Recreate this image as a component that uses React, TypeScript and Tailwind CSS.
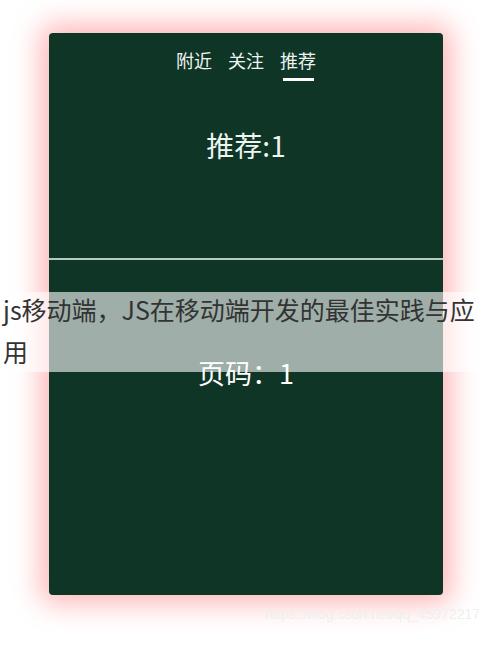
import { useState } from 'react'

const tabs = ['附近', '关注', '推荐']

export default function App() {
  const [active, setActive] = useState(2)
  const page = 1

  return (
    <div
      className="relative w-[490px] h-[651px] overflow-hidden bg-white pt-[33px] pl-[49px]"
      style={{ fontFamily: '"Noto Sans CJK SC", "Noto Sans", sans-serif' }}
    >
      <div className="w-[394px] h-[562px] rounded-[4px] bg-[#0f3527] text-[#eef4f0] shadow-[0_0_28px_8px_rgba(255,90,90,0.45)] flex flex-col">
        {/* swiper area */}
        <div className="h-[225px] flex flex-col items-center">
          <div className="flex justify-center gap-[16px] pt-[15px]">
            {tabs.map((t, i) => (
              <button
                key={t}
                onClick={() => setActive(i)}
                className="flex flex-col items-center text-[18px] leading-[24px]"
              >
                {t}
                <span
                  className={`mt-[6px] h-[3px] w-[31px] ${i === active ? 'bg-white' : 'bg-transparent'}`}
                />
              </button>
            ))}
          </div>
          <div className="mt-[48px] text-[28px] leading-[32px]">
            {tabs[active]}:{page}
          </div>
        </div>

        <div className="h-[2px] bg-[#b4cbc2]" />

        <div className="flex justify-center mt-[97px] text-[27px] leading-[32px] text-white">
          页码：{page}
        </div>
      </div>

      {/* title overlay */}
      <div className="absolute left-0 top-[292px] w-[490px] h-[80px] bg-white/60 px-[3px] text-[25px] text-[#333333]">
        <div className="mt-[-4px] leading-[42px]">js移动端，JS在移动端开发的最佳实践与应用</div>
      </div>

      <div
        className="absolute right-[10px] top-[604px] text-[14px] leading-[20px] text-[#efefef]"
        style={{ fontFamily: '"Liberation Sans", Arial, sans-serif' }}
      >
        https://blog.csdn.net/qq_45972217
      </div>
    </div>
  )
}
